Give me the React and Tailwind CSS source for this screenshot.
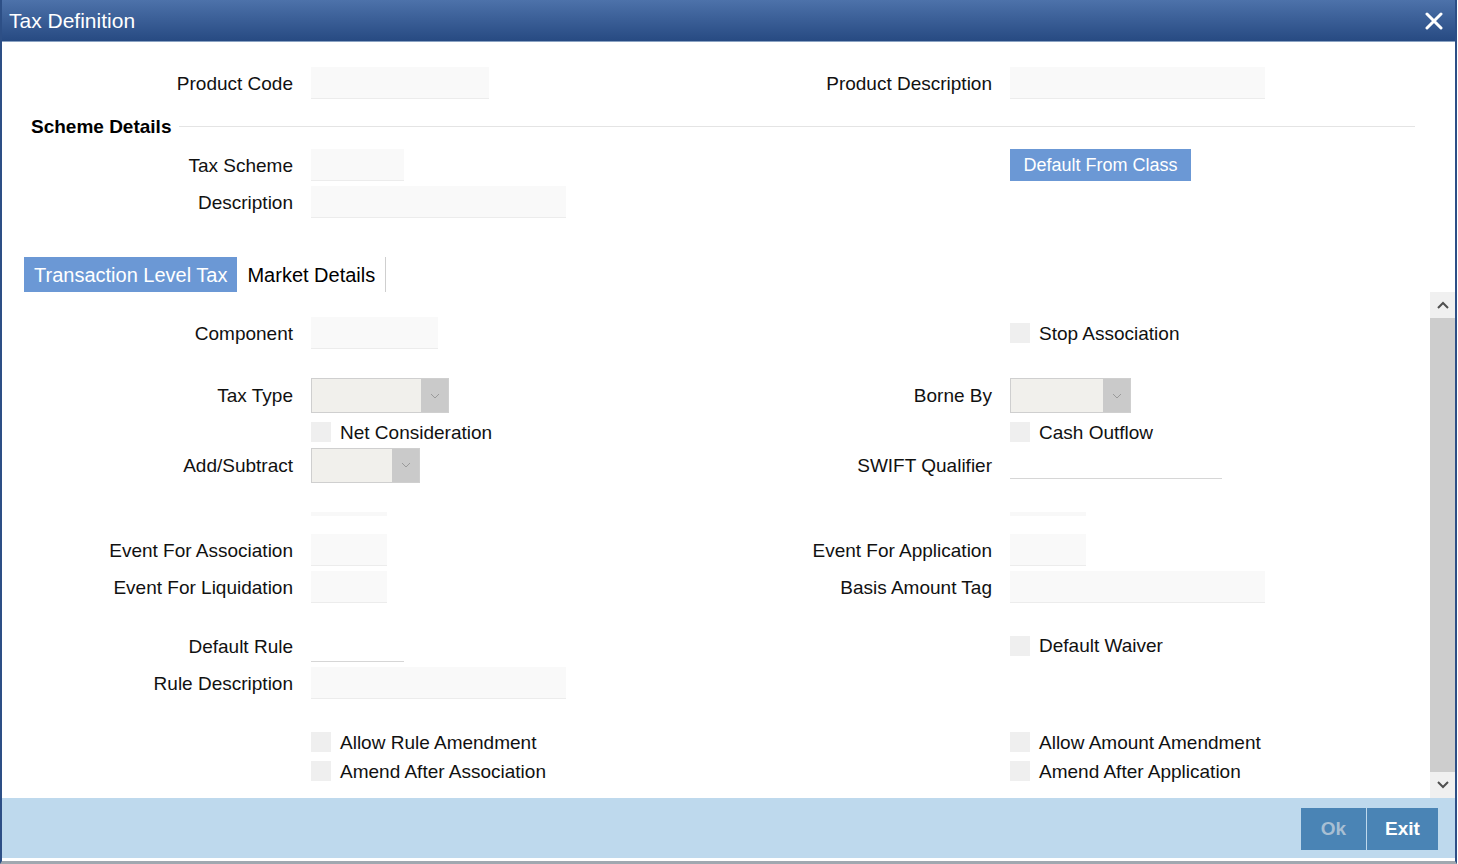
import React from "react";

const font = { fontFamily: '"Liberation Sans", Arial, sans-serif' };

function Label({ children, w = "w-[309px]" }) {
  return <div className={`${w} shrink-0 pr-[18px] pt-[2px] text-right text-[19px] text-[#111]`}>{children}</div>;
}

function Input({ w, line }) {
  if (line) return <div className={`${w} h-[32px] border-b border-[#d6d6d6]`} />;
  return <div className={`${w} h-[32px] bg-[#f9f9f9] border-b border-[#ececec]`} />;
}

function Select({ w }) {
  return (
    <div className={`${w} h-[35px] flex bg-[#f1f0ec] border border-[#cfcfcf]`}>
      <div className="flex-1" />
      <div className="w-[27px] bg-[#cacaca] flex items-center justify-center">
        <svg width="10" height="6" viewBox="0 0 10 6" fill="none" stroke="#9a9a9a" strokeWidth="1">
          <path d="M1 1l4 4 4-4" />
        </svg>
      </div>
    </div>
  );
}

function Check({ children }) {
  return (
    <div className="flex items-center h-[20px]">
      <div className="w-[20px] h-[20px] bg-[#efefef]" />
      <span className="ml-[9px] pt-[2px] text-[19px] text-[#111]">{children}</span>
    </div>
  );
}

function Row({ className = "", h = "h-[32px]", left, right }) {
  return (
    <div className={`flex items-center ${h} ${className}`}>
      <div className="w-[700px] flex items-center">{left}</div>
      <div className="flex-1 flex items-center">{right}</div>
    </div>
  );
}

const LS = () => <div className="w-[309px] shrink-0" />;
const RS = () => <div className="w-[308px] shrink-0" />;

export default function App() {
  return (
    <div className="w-[1458px] h-[864px] bg-white overflow-hidden" style={font}>
      <div className="w-[1457px] h-[864px] flex flex-col border-x-2 border-[#2d4f86] border-b-[3px] border-b-[#a0a8b0]">
        {/* title bar */}
        <div className="h-[42px] shrink-0 flex items-center justify-between pl-[7px] pr-[12px] bg-gradient-to-b from-[#4d72aa] to-[#274a82] border-b border-[#8aa2c2]">
          <span className="text-[21px] text-white">Tax Definition</span>
          <svg width="18" height="18" viewBox="0 0 18 18" stroke="white" strokeWidth="3" strokeLinecap="round">
            <path d="M2 2l14 14M16 2L2 16" />
          </svg>
        </div>

        {/* header fields */}
        <Row
          className="mt-[25px]"
          left={<><Label>Product Code</Label><Input w="w-[178px]" /></>}
          right={<><Label w="w-[308px]">Product Description</Label><Input w="w-[255px]" /></>}
        />
        <div className="mt-[17px] h-[20px] flex items-center pl-[29px] pr-[40px]">
          <span className="pt-[2px] text-[19px] font-bold text-black">Scheme Details</span>
          <div className="flex-1 ml-[8px] h-px bg-[#e4e4e4]" />
        </div>
        <Row
          className="mt-[13px]"
          left={<><Label>Tax Scheme</Label><Input w="w-[93px]" /></>}
          right={
            <>
              <RS />
              <div className="w-[181px] h-[32px] pt-[1px] bg-[#6b98d5] text-white text-[18px] flex items-center justify-center">
                Default From Class
              </div>
            </>
          }
        />
        <Row
          className="mt-[5px]"
          left={<><Label>Description</Label><Input w="w-[255px]" /></>}
        />

        {/* tabs */}
        <div className="mt-[39px] h-[35px] flex items-stretch pl-[22px]">
          <div className="px-[10px] bg-[#6b98d5] text-white text-[20px] flex items-center">Transaction Level Tax</div>
          <div className="px-[10px] text-[20px] text-black flex items-center border-r border-[#cfcfcf]">Market Details</div>
        </div>

        {/* scroll area */}
        <div className="h-[506px] flex">
          <div className="flex-1 flex flex-col">
            <Row
              className="mt-[25px]"
              left={<><Label>Component</Label><Input w="w-[127px]" /></>}
              right={<><RS /><Check>Stop Association</Check></>}
            />
            <Row
              className="mt-[29px]"
              h="h-[35px]"
              left={<><Label>Tax Type</Label><Select w="w-[138px]" /></>}
              right={<><Label w="w-[308px]">Borne By</Label><Select w="w-[121px]" /></>}
            />
            <Row
              className="mt-[9px]"
              h="h-[20px]"
              left={<><LS /><Check>Net Consideration</Check></>}
              right={<><RS /><Check>Cash Outflow</Check></>}
            />
            <Row
              className="mt-[5px]"
              h="h-[36px]"
              left={<><Label>Add/Subtract</Label><Select w="w-[109px]" /></>}
              right={<><Label w="w-[308px]">SWIFT Qualifier</Label><div className="w-[212px] h-[32px] border-b border-[#d6d6d6] mt-[-4px]" /></>}
            />
            <Row
              className="mt-[29px]"
              h="h-[4px]"
              left={<><LS /><div className="w-[76px] h-[4px] bg-[#f8f8f8]" /></>}
              right={<><RS /><div className="w-[76px] h-[4px] bg-[#f8f8f8]" /></>}
            />
            <Row
              className="mt-[18px]"
              left={<><Label>Event For Association</Label><Input w="w-[76px]" /></>}
              right={<><Label w="w-[308px]">Event For Application</Label><Input w="w-[76px]" /></>}
            />
            <Row
              className="mt-[5px]"
              left={<><Label>Event For Liquidation</Label><Input w="w-[76px]" /></>}
              right={<><Label w="w-[308px]">Basis Amount Tag</Label><Input w="w-[255px]" /></>}
            />
            <Row
              className="mt-[27px]"
              left={<><Label>Default Rule</Label><Input w="w-[93px]" line /></>}
              right={<><RS /><div className="mt-[-1px]"><Check>Default Waiver</Check></div></>}
            />
            <Row
              className="mt-[5px]"
              left={<><Label>Rule Description</Label><Input w="w-[255px]" /></>}
            />
            <Row
              className="mt-[33px]"
              h="h-[20px]"
              left={<><LS /><Check>Allow Rule Amendment</Check></>}
              right={<><RS /><Check>Allow Amount Amendment</Check></>}
            />
            <Row
              className="mt-[9px]"
              h="h-[20px]"
              left={<><LS /><Check>Amend After Association</Check></>}
              right={<><RS /><Check>Amend After Application</Check></>}
            />
          </div>
          {/* scrollbar */}
          <div className="w-[25px] flex flex-col">
            <div className="h-[26px] bg-[#f0f0f0] flex items-center justify-center">
              <svg width="12" height="8" viewBox="0 0 12 8" fill="none" stroke="#505050" strokeWidth="2">
                <path d="M1 7l5-5 5 5" />
              </svg>
            </div>
            <div className="flex-1 bg-[#cdcdcd]" />
            <div className="h-[26px] bg-[#f0f0f0] flex items-center justify-center">
              <svg width="12" height="8" viewBox="0 0 12 8" fill="none" stroke="#505050" strokeWidth="2">
                <path d="M1 1l5 5 5-5" />
              </svg>
            </div>
          </div>
        </div>

        {/* footer */}
        <div className="h-[60px] shrink-0 bg-[#bed9ed] flex items-center justify-end pr-[17px] pt-[2px]">
          <div className="flex h-[42px]">
            <div className="w-[65px] bg-[#4a84b5] text-[#a8bfd3] font-bold text-[19px] flex items-center justify-center">Ok</div>
            <div className="w-px" />
            <div className="w-[71px] bg-[#4a84b5] text-white font-bold text-[19px] flex items-center justify-center">Exit</div>
          </div>
        </div>
        <div className="h-[3px] shrink-0 bg-white" />
      </div>
    </div>
  );
}
